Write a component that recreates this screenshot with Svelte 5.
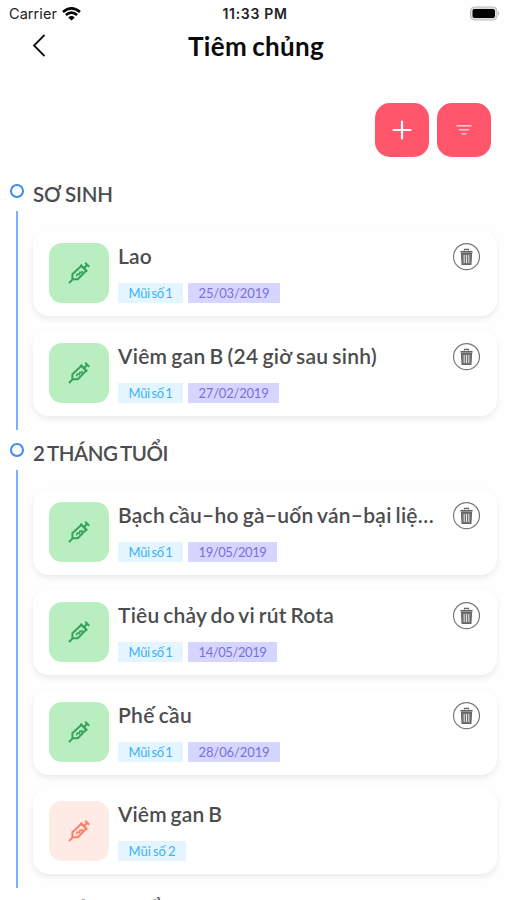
<script>
  const groups = [
    {
      title: 'SƠ SINH',
      width: 80,
      items: [
        { name: 'Lao', width: 34, dose: 1, date: '25/03/2019', tag: 92 },
        { name: 'Viêm gan B (24 giờ sau sinh)', width: 259, dose: 1, date: '27/02/2019', tag: 91 }
      ]
    },
    {
      title: '2 THÁNG TUỔI',
      width: 135,
      items: [
        { name: 'Bạch cầu–ho gà–uốn ván–bại liệ…', width: 316, dose: 1, date: '19/05/2019', tag: 89 },
        { name: 'Tiêu chảy do vi rút Rota', width: 216, dose: 1, date: '14/05/2019', tag: 89 },
        { name: 'Phế cầu', width: 74, dose: 1, date: '28/06/2019', tag: 92 },
        { name: 'Viêm gan B', width: 104, dose: 2 }
      ]
    },
    { title: '3 THÁNG TUỔI', width: 135, items: [] }
  ];

  // spread the letters so that a label fills the given width
  function fit(node, width) {
    const natural = node.getBoundingClientRect().width;
    const count = [...node.textContent].length;
    node.style.letterSpacing = `${(width - natural) / count}px`;
  }
</script>

<main>
  <header class="status">
    <div class="carrier">
      <span use:fit={48}>Carrier</span>
      <svg class="wifi" width="19" height="14" viewBox="0 0 19 14" fill="none" stroke="#000" stroke-width="2.6">
        <path d="M1 5Q9.5-2.2 18 5M3.9 8.1Q9.5 3.3 15.1 8.1" />
        <path d="M6.3 10.4Q9.5 7.7 12.7 10.4L9.5 13.6Z" fill="#000" stroke="none" />
      </svg>
    </div>
    <span class="time" use:fit={65}>11:33 PM</span>
    <svg class="battery" width="32" height="15" viewBox="0 0 32 15">
      <rect x="1.5" y="1" width="26.5" height="13" rx="4" fill="#dcdcdc" stroke="#bdbdbd" />
      <rect x="3.5" y="3" width="22.5" height="9" rx="2" />
      <path d="M29.2 5.2q2.2 2.3 0 4.6Z" fill="#b5b5b5" />
    </svg>
  </header>

  <nav>
    <button class="back" aria-label="Back">
      <svg width="14" height="24" viewBox="0 0 14 24" fill="none" stroke="#111" stroke-width="1.8">
        <path d="M12.5 1 2 11.5 12.5 22" />
      </svg>
    </button>
    <h1><span use:fit={136}>Tiêm chủng</span></h1>
  </nav>

  <div class="actions">
    <button aria-label="Add">
      <svg width="20" height="20" viewBox="0 0 20 20" stroke="#fff" stroke-width="2.2" stroke-linecap="round">
        <path d="M10 1.5v17M1.5 10h17" />
      </svg>
    </button>
    <button aria-label="Filter">
      <svg width="16" height="12" viewBox="0 0 16 12" stroke="#ffc3cb" stroke-width="1.6">
        <path d="M.5 1.7h15M3 5.7h10M5.5 9.7h5" />
      </svg>
    </button>
  </div>

  {#each groups as group}
    <section>
      <div class="rail">
        <i class="dot"></i>
        <i class="line"></i>
      </div>
      <div class="body">
        <h2><span use:fit={group.width}>{group.title}</span></h2>
        {#each group.items as item}
          <article>
            <div class="thumb" class:pending={!item.date}>
              <svg width="24" height="24" viewBox="0 0 24 24" fill="none" stroke="currentColor" stroke-width="2">
                <path d="M2 22 6.4 17.6M5.4 18.6V13.2L14.4 4.8 19.2 9.6 10.8 18.2H5.8" />
                <path d="M17 7 19.8 4.2M18.2 1.8l4 4M13.4 3.8l6.8 6.8" />
                <path d="m9.4 15.4 1-2.4 2 .6.5-2.4 2 .6.4-2" stroke-width="1.5" />
              </svg>
            </div>
            <div class="info">
              <h3><span use:fit={item.width}>{item.name}</span></h3>
              <div class="tags">
                <span class="tag dose"><span use:fit={item.dose === 1 ? 44 : 47}>Mũi số {item.dose}</span></span>
                {#if item.date}
                  <span class="tag date"><span use:fit={item.tag - 21}>{item.date}</span></span>
                {/if}
              </div>
            </div>
            {#if item.date}
              <button class="remove" aria-label="Delete">
                <svg width="28" height="28" viewBox="0 0 28 28" fill="none" stroke="#666">
                  <circle cx="13.5" cy="13.7" r="13" stroke="#777" stroke-width="1.2" />
                  <path d="M11.5 7.5V6.4h4v1.1" stroke-width="1.2" />
                  <path d="M7.5 8.8h12" stroke-width="1.8" />
                  <path d="M8.5 10.6h10l-.6 10.7H9.1Z" fill="#777" stroke-width="1.2" />
                  <path d="M11.2 12v8M13.5 12v8M15.8 12v8" stroke="#eee" stroke-width=".9" />
                </svg>
              </button>
            {/if}
          </article>
        {/each}
      </div>
    </section>
  {/each}
</main>

<style>
  :global(body) {
    margin: 0;
    background: #fff;
  }

  main {
    width: 507px;
    height: 900px;
    overflow: hidden;
    background: #fefefe;
    font-family: Lato, 'Noto Sans', sans-serif;
    color: #4c4c4e;
  }

  button {
    display: flex;
    align-items: center;
    justify-content: center;
    padding: 0;
    border: 0;
    background: none;
  }

  h1, h2, h3 {
    margin: 0;
    white-space: nowrap;
    word-spacing: -1.5px;
  }

  svg {
    display: block;
    flex: none;
  }

  .status {
    display: grid;
    grid-template-columns: 1fr auto 1fr;
    align-items: center;
    height: 27px;
    padding: 0 6px 0 9px;
    font-family: Inter, sans-serif;
    font-size: 14.5px;
    color: #222;
  }

  .carrier {
    display: flex;
    align-items: center;
    gap: 5px;
  }

  .time {
    font-size: 14px;
    font-weight: 600;
  }

  .battery {
    justify-self: end;
  }

  nav {
    display: grid;
    grid-template-columns: 60px 1fr 60px;
    align-items: center;
    height: 38px;
  }

  .back {
    padding-left: 17px;
  }

  h1 {
    padding-left: 5px;
    text-align: center;
    font-size: 26px;
    line-height: 37px;
    font-weight: 700;
    color: #0b0b0b;
  }

  .actions {
    display: flex;
    justify-content: flex-end;
    gap: 8px;
    padding: 38px 16px 13.6px 0;
  }

  .actions button {
    width: 54px;
    height: 54px;
    border-radius: 15px;
    background: #ff566c;
  }

  section {
    display: flex;
  }

  .rail {
    display: flex;
    flex-direction: column;
    align-items: center;
    width: 34px;
    flex: none;
  }

  .dot {
    box-sizing: border-box;
    width: 14px;
    height: 14px;
    margin: 13px 0;
    border: 2.6px solid #418aef;
    border-radius: 50%;
  }

  .line {
    flex: 1;
    width: 2px;
    background: #7bafff;
  }

  .body {
    flex: 1;
    min-width: 0;
    padding-right: 10px;
    margin-left: -1px;
  }

  h2 {
    height: 59.6px;
    font-size: 20.5px;
    line-height: 47px;
    font-weight: 600;
  }

  article {
    display: flex;
    box-sizing: border-box;
    height: 86px;
    margin-bottom: 13.7px;
    padding: 13px 16px;
    border-radius: 16px;
    background: #fff;
    box-shadow: 0 3px 6px rgba(0, 0, 0, 0.08);
  }

  .thumb {
    display: flex;
    align-items: center;
    justify-content: center;
    width: 60px;
    height: 60px;
    flex: none;
    border-radius: 13px;
    background: #b8eec0;
    color: #35a15b;
  }

  .pending {
    background: #ffebe5;
    color: #ff7d66;
  }

  .info {
    flex: 1;
    min-width: 0;
    padding-left: 9px;
  }

  h3 {
    height: 40px;
    font-size: 21px;
    line-height: 26px;
    font-weight: 600;
  }

  .tags {
    display: flex;
    gap: 5px;
  }

  .tag {
    height: 20px;
    padding: 0 10.5px;
    font-size: 13px;
    line-height: 20px;
    white-space: nowrap;
  }

  .tag.dose {
    background: #e4f5ff;
    color: #3ab3f5;
    word-spacing: -1.5px;
  }

  .tag.date {
    padding: 0 10px 0 10.5px;
    background: #d6d5ff;
    color: #7970db;
  }

  .remove {
    width: 28px;
    height: 28px;
    flex: none;
  }
</style>
